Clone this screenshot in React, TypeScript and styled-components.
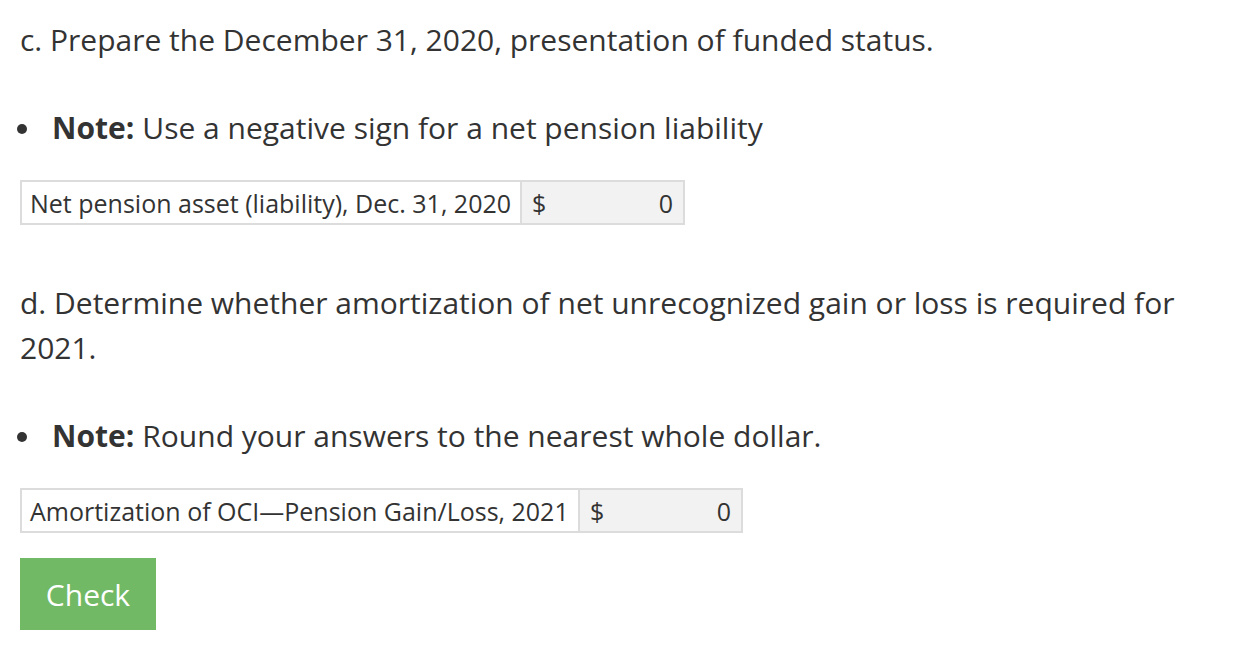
import React from "react";
import styled, { createGlobalStyle } from "styled-components";

const Global = createGlobalStyle`
  html, body {
    margin: 0;
    padding: 0;
    background: #ffffff;
  }
  body {
    font-family: "Open Sans", "DejaVu Sans", sans-serif;
    color: #333333;
  }
`;

const Page = styled.div`
  padding: 17px 20px 0 20px;
  max-width: 1190px;
`;

const Question = styled.p<{ $top?: number }>`
  margin: ${(p) => p.$top || 0}px 0 0 0;
  font-size: 30px;
  line-height: 45px;
`;

const NoteList = styled.ul`
  margin: 43px 0 0 0;
  padding: 0;
  list-style: none;
  font-size: 30px;
  line-height: 45px;
`;

const NoteItem = styled.li`
  display: flex;
  align-items: center;
  &::before {
    content: "";
    width: 10px;
    height: 10px;
    border-radius: 50%;
    background: #333;
    margin: 2px 25px 0 -3px;
    flex: none;
  }
  b {
    margin-right: 8px;
  }
`;

const Answer = styled.table<{ $labelWidth: number }>`
  margin-top: 30px;
  border-collapse: collapse;
  font-family: "Open Sans", sans-serif;
  font-size: 25px;
  td {
    border: 2px solid #dcdcdc;
    height: 41px;
    padding: 0 8px;
  }
  td.label {
    width: ${(p) => p.$labelWidth}px;
    box-sizing: border-box;
    background: #fff;
    white-space: nowrap;
  }
  td.value {
    width: 141px;
    padding: 0 10px;
    background: #f2f2f2;
  }
`;

const ValueRow = styled.div`
  display: flex;
  justify-content: space-between;
`;

const Check = styled.button`
  display: block;
  margin-top: 25px;
  background: #72b966;
  color: #ffffff;
  border: none;
  font-family: "Open Sans", sans-serif;
  font-size: 30px;
  width: 136px;
  height: 72px;
  padding: 0;
`;

const AnswerTable: React.FC<{ label: string; width: number }> = ({ label, width }) => (
  <Answer $labelWidth={width}>
    <tbody>
      <tr>
        <td className="label">{label}</td>
        <td className="value">
          <ValueRow>
            <span>$</span>
            <span>0</span>
          </ValueRow>
        </td>
      </tr>
    </tbody>
  </Answer>
);

export default function App() {
  return (
    <>
      <Global />
      <Page>
        <Question>c. Prepare the December 31, 2020, presentation of funded status.</Question>
        <NoteList>
          <NoteItem>
            <span>
              <b>Note:</b>Use a negative sign for a net pension liability
            </span>
          </NoteItem>
        </NoteList>
        <AnswerTable label="Net pension asset (liability), Dec. 31, 2020" width={500} />
        <Question $top={55}>
          d. Determine whether amortization of net unrecognized gain or loss is required for 2021.
        </Question>
        <NoteList>
          <NoteItem>
            <span>
              <b>Note:</b>Round your answers to the nearest whole dollar.
            </span>
          </NoteItem>
        </NoteList>
        <AnswerTable label="Amortization of OCI—Pension Gain/Loss, 2021" width={558} />
        <Check>Check</Check>
      </Page>
    </>
  );
}
